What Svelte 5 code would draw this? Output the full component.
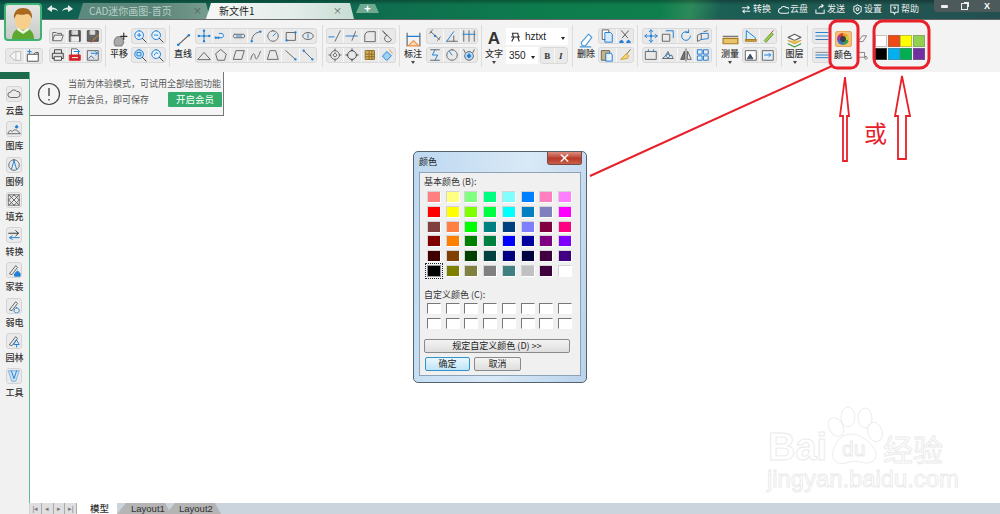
<script>
	const g = "#666";
	const b = "#1f7fd4";
	const o = "#d9a23b";

	// Each icon is a list of [path, stroke, fill] on a 16x16 box
	const icons = {
		open: [["M2 13V4h4l1 1h5v2", g], ["M2 13l2-6h10l-2 6z", g, "#eee"]],
		save: [["M2 2h12v12H2z", "#444", "#555"], ["M5 2h6v4H5z", "#ddd", "#ddd"], ["M4 9h8v5H4z", "#eee", "#eee"]],
		saveas: [["M2 2h12v12H2z", "#444", "#666"], ["M5 2h5v4H5z", "#ddd", "#ddd"], ["M7 14l7-7", "#e08a20"], ["M6 15l2-1", "#c33"]],
		print: [["M4 6V2h8v4", "#444"], ["M2 6h12v6H2z", "#444", "#ddd"], ["M4 10h8v4H4z", "#444", "#fff"]],
		pdf: [["M4 8V1h6l2 2v5", g, "#fff"], ["M2 8h12v6H2z", "#d2232a", "#d2232a"], ["M5 11h6", "#fff"], ["M7 4h6m-2-2l2 2-2 2", b]],
		exp: [["M2 3h12v11H2z", g, "#dfe8ef"], ["M3 12l3-3 3 3", "#567"], ["M6 6h7m-2-2l2 2-2 2", b]],
		back: [["M14 3H8L2 8l6 5h6z", "#bbb", "#f7f7f7"], ["M9 3v10", "#bbb"]],
		newdoc: [["M2 6h12v8H2z", "#555", "#fff"], ["M6 3H2m2-2v4", b], ["M9 6l2-2h3v2", "#555"]],
		pan: [["M4 14c-2-3-1-6 1-8 2-1 5-1 6 1l1 4-2 3z", "#888", "#aaa"], ["M12 2v6M9 5h6", "#333"]],
		zin: [["M7 2a5 5 0 1 0 .01 0z", b, "#e8f2fb"], ["M5 7h4M7 5v4", b], ["M10.5 10.5L15 15", "#444"]],
		zout: [["M7 2a5 5 0 1 0 .01 0z", b, "#e8f2fb"], ["M5 7h4", b], ["M10.5 10.5L15 15", "#444"]],
		zwin: [["M7 2a5 5 0 1 0 .01 0z", b, "#cfe3f5"], ["M5 5h4v4H5z", b], ["M10.5 10.5L15 15", "#444"]],
		zprev: [["M7 2a5 5 0 1 0 .01 0z", b, "#e8f2fb"], ["M5 8a2.5 2.5 0 0 1 4-2", b], ["M10.5 10.5L15 15", "#444"]],
		line: [["M3 13L13 4", g], ["M3 13h.1M13 4h.1", b, "none", 2.4]],
		axis: [["M8 2v12M2 8h12", b], ["M8 2h.1M8 14h.1M2 8h.1M14 8h.1M8 8h.1", b, "none", 2.6]],
		spline: [["M2 10h6c4 0 4-5 0-5H6", b], ["M2 10h.1M5 10h.1", b, "none", 2.6]],
		dblline: [["M3 6h10c2 0 2 4 0 4H3C1 10 1 6 3 6z", g], ["M5 8h6", b]],
		arc: [["M3 14C3 8 7 4 13 3", g], ["M3 14h.1M13 3h.1", b, "none", 2.6]],
		circ: [["M8 2a6 6 0 1 0 .01 0z", g], ["M8 8l3-3", b]],
		rect: [["M3 4h10v9H3z", g], ["M3 13h.1M13 4h.1", b, "none", 2.6]],
		ell: [["M8 4c8 0 8 8 0 8S0 4 8 4z", g], ["M8 6v4", b]],
		tri: [["M1 13L8 5l7 8z", g]],
		penta: [["M8 2l6 5-2 7H4L2 7z", g]],
		para: [["M5 3h9l-3 10H2z", g]],
		curve: [["M2 13c2-8 4-8 5-3s3 2 6-6", g]],
		trap: [["M5 3h6l3 10H2z", g]],
		diag: [["M2 3l11 10", g], ["M13 13h.1", b, "none", 2.6]],
		diag2: [["M3 3l10 10", g], ["M3 3h.1M13 13h.1", b, "none", 2.6]],
		trim: [["M1 9h6", b], ["M14 2L8 14", g]],
		ext: [["M1 8h13", b], ["M12 3L8 13", g]],
		fillet: [["M2 14V8c0-3 2-5 5-5h7v11z", g]],
		cham: [["M4 3l9 9a4 4 0 1 1-5-5", g], ["M3 2l3 4", g]],
		gear: [["M8 3a5 5 0 1 0 .01 0z", g], ["M8 6a2 2 0 1 0 .01 0z", g], ["M8 1v2M8 13v2M1 8h2M13 8h2", g]],
		ring: [["M8 3a5 5 0 1 0 .01 0z", "#444"], ["M8 1v2M8 13v2M1 8h2M13 8h2", "#444"]],
		hatch: [["M3 3h10v10H3z", "#8a6a20", "#d8b060"], ["M3 7h10M3 10h10M7 3v10M10 3v10", "#8a6a20"]],
		fill: [["M3 9l5-5 5 5-5 5z", b, "#9cd0f5"], ["M11 2l3 4", o]],
		dim: [["M2 2v12M14 2v12", g], ["M2 5h12", b], ["M3 14l5-5 5 5z", "#e89048", "#fbd9b0"]],
		dimA: [["M3 3l10 9", g], ["M5 1L2 5M14 9l-3 4", g], ["M8 8h.1", b, "none", 2.6]],
		dimB: [["M2 14h12", g], ["M2 14L10 3", b], ["M10 8v6", g]],
		dimC: [["M2 2v12M8 2v12M14 2v12", g], ["M1 6h14", b]],
		dimD: [["M3 2h10M3 14h10", g], ["M8 2l-3 6h6l-3 6", b]],
		dimE: [["M8 2a6 6 0 1 0 .01 0z", g], ["M8 8L5 4", b]],
		dimF: [["M2 2l2 4M14 2l-2 4", g], ["M8 4a5 5 0 1 0 .01 0z", g, "#bcdcf7"], ["M8 7a2 2 0 1 0 .01 0z", b, b]],
		eraser: [["M3 11l7-8 3 3-6 8H4z", "#4a9ad8", "#fff"], ["M2 15h10", "#4a9ad8"]],
		copy: [["M3 1h7v11H3z", g, "#fff"], ["M6 4h6l2 2v9H6z", b, "#d8ebfa"]],
		cut: [["M4 2l7 8M12 2l-7 8", "#555"], ["M4 13a2 2 0 1 0 .01 0zM12 13a2 2 0 1 0 .01 0z", b, b]],
		paste: [["M2 3h9v11H2z", g, "#c9b27c"], ["M7 6h6l1 2v7H7z", b, "#e6f1fb"]],
		brush: [["M14 2l-5 6", "#8a6a20"], ["M9 7l-6 6 8-1 1-3z", o, "#f0d37c"]],
		move: [["M8 1v14M1 8h14", b], ["M6 3l2-2 2 2M6 13l2 2 2-2M3 6L1 8l2 2M13 6l2 2-2 2", b], ["M8 8h.1", b, "none", 2.6]],
		scale: [["M2 6h8v8H2z", g], ["M6 2h8v8", b]],
		rot: [["M13 8a5 5 0 1 1-2-4", b], ["M11 1v3H8", b]],
		iso: [["M2 7l4-2v7l-4 2z", g], ["M6 5h8v6l-8 1", b], ["M9 3l4-1", g]],
		mrect: [["M2 4h12v9H2z", g], ["M5 4V2M11 4V2", b]],
		cloud2: [["M2 12h12l-2-4-2 1-2-5-3 5z", g], ["M8 7a2 2 0 1 0 .01 0z", b]],
		mirror: [["M8 1v14", g], ["M6 4L2 13h4z", "#555", "#777"], ["M10 4l4 9h-4z", g]],
		array: [["M2 2h5v5H2zM9 2h5v5H9zM2 9h5v5H2zM9 9h5v5H9z", b]],
		ruler: [["M1 7h14v5H1z", "#a87a20", "#e8c468"], ["M1 5h14", "#777"]],
		mArea: [["M3 2l10 8v2H3z", b, "#dcecfa"], ["M2 12h12v2H2z", "#a87a20", o]],
		mPen: [["M4 13l8-9 2 2-8 9z", "#6a9a30", "#9ccc50"], ["M12 4l2-2", "#d33"]],
		mImg: [["M2 3h12v11H2z", g, "#fff"], ["M4 12l3-5 3 5z", "#345", "#456"]],
		mExp: [["M2 3h12v11H2z", g, "#e4eef7"], ["M4 8h7m-2-2l2 2-2 2", b]],
		layer: [["M2 6l6-3 6 3-6 3z", g, "#fff"], ["M2 9l6 3 6-3", "#d9a23b", "#ecc860"], ["M2 12l6 3 6-3", "#3b9a4a"]],
		lines: [["M1 4h14M1 8h14", b], ["M1 12h14", "#3b6fb5"]],
		dash: [["M1 5h14", "#888"], ["M1 8h14M1 11h14", b]],
		tag: [["M2 12L8 4h6l-5 8z", g]],
		node: [["M2 5h9v7H2z", g], ["M13 11a2 2 0 1 0 .01 0z", g]],
		cloud: [["M4 12a3 3 0 0 1 0-6 4 4 0 0 1 7-1 3.5 3.5 0 0 1 1 7z", g]],
		hills: [["M1 13c2-4 3-4 5-2 2-3 5-3 9 2z", g], ["M11 4a1.5 1.5 0 1 0 .01 0z", b, b]],
		compass: [["M8 2a6 6 0 1 0 .01 0z", g], ["M8 3L5 13M8 3l3 10", b]],
		net: [["M2 2h12v12H2z", "#777"], ["M2 2l12 12M14 2L2 14M2 8l6-6M8 14l6-6M2 8l6 6M8 2l6 6", "#666"]],
		swap: [["M2 6h11m-3-3l3 3-3 3", "#333"], ["M14 11H3m3-2l-3 2 3 2", b]],
		house: [["M3 12L10 3l2 2-6 8z", g], ["M9 12l3-3 3 3v3H9z", b, b]],
		wire: [["M3 12L10 3l2 2-6 8z", g], ["M11 10a3 3 0 1 0 .01 0z", b]],
		tree: [["M3 12L10 3l2 2-6 8z", g], ["M11 7l3 5H8zM11 12v3", b]],
		vee: [["M2 2h12l-4 12H6z", "#7fb0e0", "#cfe3f7"], ["M5 2l3 9 3-9", b]],
	};

	// Toolbar pills: gap is the space before the item, rows hold the icon names
	const pill = (gap, width, rows) => ({ kind: "pills", gap, width, rows });
	const tool = (gap, width, label, name, caret = false) => ({ kind: "tool", gap, width, label, name, caret });
	const sep = (gap) => ({ kind: "sep", gap });

	const leading = [
		pill(0, 53, [["open", "save", "saveas"], ["print", "pdf", "exp"]]),
		sep(3),
		tool(1, 24, "平移", "pan"),
		pill(0, 35, [["zin", "zout"], ["zwin", "zprev"]]),
		sep(3),
		tool(1, 24, "直线", "line"),
		pill(0, 122, [["axis", "spline", "dblline", "arc", "circ", "rect", "ell"], ["tri", "penta", "para", "curve", "trap", "diag", "diag2"]]),
		sep(5),
		pill(3, 70, [["trim", "ext", "fillet", "cham"], ["gear", "ring", "hatch", "fill"]]),
		sep(3),
		tool(0, 26, "标注", "dim", true),
		pill(0, 52, [["dimA", "dimB", "dimC"], ["dimD", "dimE", "dimF"]]),
		sep(3),
		tool(0, 24, "文字", "", true),
	];
	const trailing = [
		sep(4),
		tool(1, 24, "删除", "eraser"),
		pill(0, 36, [["copy", "cut"], ["paste", "brush"]]),
		sep(3),
		pill(4, 70, [["move", "scale", "rot", "iso"], ["mrect", "cloud2", "mirror", "array"]]),
		sep(4),
		tool(1, 24, "测量", "ruler", true),
		pill(0, 35, [["mArea", "mPen"], ["mImg", "mExp"]]),
		sep(4),
		tool(0, 25, "图层", "layer", true),
		sep(0),
		pill(4, 19, [["lines"], ["dash"]]),
	];

	const quickColors = ["#ffffff", "#f04a14", "#ffff00", "#92d050", "#000000", "#00b0f0", "#00b050", "#7030a0"];

	const sideItems = [
		{ label: "云盘", name: "cloud" },
		{ label: "图库", name: "hills" },
		{ label: "图例", name: "compass" },
		{ label: "填充", name: "net" },
		{ label: "转换", name: "swap" },
		{ label: "家装", name: "house" },
		{ label: "弱电", name: "wire" },
		{ label: "园林", name: "tree" },
		{ label: "工具", name: "vee" },
	];

	const topLinks = [
		{ label: "转换", d: "M1 4h8m-2-2l2 2-2 2M10 8H2m2-2L2 8l2 2" },
		{ label: "云盘", d: "M3 10a2.5 2.5 0 0 1 0-5 3.5 3.5 0 0 1 6-1 3 3 0 0 1 1 6z" },
		{ label: "发送", d: "M1 6v4h9V6M4 5c1-2 3-3 5-3M7 0l2 2-2 2" },
		{ label: "设置", d: "M6 1l4 2v5l-4 3-4-3V3zM6 4a1.5 1.5 0 1 0 .01 0z" },
		{ label: "帮助", d: "M2 1h8v8H7l-1 2-1-2H2zM5 4c0-1 2-1 2 0S6 5 6 6" },
	];

	const basicColors = [
		"#ff8080", "#ffff80", "#80ff80", "#00ff80", "#80ffff", "#0080ff", "#ff80c0", "#ff80ff",
		"#ff0000", "#ffff00", "#80ff00", "#00ff40", "#00ffff", "#0080c0", "#8080c0", "#ff00ff",
		"#804040", "#ff8040", "#00ff00", "#008080", "#004080", "#8080ff", "#800040", "#ff0080",
		"#800000", "#ff8000", "#008000", "#008040", "#0000ff", "#0000a0", "#800080", "#8000ff",
		"#400000", "#804000", "#004000", "#004040", "#000080", "#000040", "#400040", "#400080",
		"#000000", "#808000", "#808040", "#808080", "#408080", "#c0c0c0", "#400040", "#ffffff",
	];
	const customSlots = Array(16).fill(0);
</script>

{#snippet icon(name, size = 14)}
	<svg class="ico" width={size} height={size} viewBox="0 0 16 16">
		{#each icons[name] || [] as [d, stroke, fill, weight]}
			<path {d} {stroke} fill={fill || "none"} stroke-width={weight || 1.1} stroke-linecap="round" stroke-linejoin="round" />
		{/each}
	</svg>
{/snippet}

{#snippet items(list)}
	{#each list as item}
		{#if item.kind === "sep"}
			<div class="sep" style="margin-left:{item.gap}px"></div>
		{:else if item.kind === "tool"}
			<div class="tool" style="margin-left:{item.gap}px;width:{item.width}px">
				<div class="tool-icon">
					{#if item.name}
						{@render icon(item.name, 17)}
					{:else}
						<span class="big-a">A</span>
					{/if}
				</div>
				<span class="tool-label">{item.label}</span>
				{#if item.caret}<span class="caret"></span>{/if}
			</div>
		{:else}
			<div class="pills" style="margin-left:{item.gap}px;width:{item.width}px">
				{#each item.rows as row}
					<div class="pill">
						{#each row as name}
							<span class="cell">{@render icon(name)}</span>
						{/each}
					</div>
				{/each}
			</div>
		{/if}
	{/each}
{/snippet}

<div class="app">
	<aside class="sidebar">
		<div class="side-head"></div>
		{#each sideItems as item}
			<div class="side-item">
				<span class="side-icon">{@render icon(item.name)}</span>
				<span>{item.label}</span>
			</div>
		{/each}
	</aside>

	<div class="titlebar">
		<div class="tabs">
			<span class="arrow">
				<svg width="28" height="12" viewBox="0 0 28 12">
					<path d="M1 6l5-4v2.500c3 0 5 1 6 4-2-2-3-2-6-2V9z M27 6l-5-4v2.500c-3 0-5 1-6 4 2-2 3-2 6-2V9z" fill="#e8efec" />
				</svg>
			</span>
			<div class="tab tab-home">CAD迷你画图-首页<i>×</i></div>
			<div class="tab tab-file">新文件1<i>×</i></div>
			<div class="tab-plus">+</div>
		</div>
		<div class="links">
			{#each topLinks as link}
				<span class="link">
					<svg width="11" height="11" viewBox="0 0 12 12">
						<path d={link.d} fill="none" stroke="#f2f2f2" stroke-width="1.100" />
					</svg>
					{link.label}
				</span>
			{/each}
		</div>
		<div class="winbtns">
			<span class="winbtn"><b class="min"></b></span>
			<span class="winbtn"><b class="restore"></b></span>
			<span class="winbtn close">X</span>
		</div>
	</div>

	<div class="avatar">
		<svg width="34" height="34" viewBox="0 0 34 34">
			<path d="M6 34c0-8 5-11 11-11s11 3 11 11z" fill="#5fa82f" />
			<path d="M12 22l5 4 5-4 1 3-6 4-6-4z" fill="#eef5e2" />
			<ellipse cx="17" cy="15" rx="8" ry="10" fill="#f7cf8a" />
			<path d="M8 14c-1-8 4-11 9-11s10 3 9 11c-1-3-3-5-5-5-3 1-8 1-10 0-1 1-2 3-3 5z" fill="#a9691f" />
		</svg>
	</div>

	<div class="toolbar">
		<div class="lead">
			<div class="pill small-pill">
				<span class="cell">{@render icon("back")}</span>
				<span class="cell">{@render icon("newdoc")}</span>
			</div>
		</div>

		{@render items(leading)}

		<div class="font-box">
			<div class="select">
				<span class="font-glyph">
					<svg width="13" height="12" viewBox="0 0 16 16">
						<path d="M4 3h7l1 5H5zM3 14l3-6M11 8l2 6M2 8h12" fill="none" stroke="#333" stroke-width="1.600" />
					</svg>
				</span>
				<span class="font-name">hztxt</span>
				<span class="drop"></span>
			</div>
			<div class="font-row">
				<div class="select size"><span class="font-name">350</span><span class="drop"></span></div>
				<div class="pill bi"><span class="cell"><b>B</b></span><span class="cell"><em>I</em></span></div>
			</div>
		</div>

		{@render items(trailing)}

		<div class="color-btn">
			<span class="color-box"><span class="color-wheel"></span></span>
			<span class="tool-label">颜色</span>
		</div>
		<div class="mini-col">
			{@render icon("tag", 11)}
			{@render icon("node", 11)}
		</div>
		<div class="swatches">
			{#each quickColors as color}
				<span class="swatch" style="background:{color}"></span>
			{/each}
		</div>
	</div>

	<main class="canvas">
		<div class="notice">
			<svg width="24" height="24" viewBox="0 0 24 24">
				<circle cx="12" cy="12" r="10.500" fill="none" stroke="#444" stroke-width="1.200" />
				<path d="M12 6v8M12 17v1.500" stroke="#444" stroke-width="1.400" />
			</svg>
			<div class="notice-text">
				<p>当前为体验模式，可试用全部绘图功能</p>
				<div class="notice-row">
					<p>开启会员，即可保存</p>
					<span class="vip">开启会员</span>
				</div>
			</div>
		</div>

		<section class="dialog">
			<header class="dlg-title">
				<span>颜色</span>
				<span class="dlg-close">×</span>
			</header>
			<div class="dlg-body">
				<p class="dlg-label">基本颜色 (B):</p>
				<div class="color-grid">
					{#each basicColors as color, i}
						<span class="cc {i === 40 ? 'picked' : ''}" style="background:{color}"></span>
					{/each}
				</div>
				<p class="dlg-label custom">自定义颜色 (C):</p>
				<div class="color-grid custom-grid">
					{#each customSlots as _}
						<span class="cc empty"></span>
					{/each}
				</div>
				<button class="dlg-btn wide">规定自定义颜色 (D) &gt;&gt;</button>
				<div class="dlg-actions">
					<button class="dlg-btn ok">确定</button>
					<button class="dlg-btn cancel">取消</button>
				</div>
			</div>
		</section>

		<svg class="watermark" width="190" height="100" viewBox="0 0 190 100">
			<g fill="none" stroke="#eaeaea" stroke-width="0.900">
				<ellipse cx="70" cy="21" rx="7" ry="10" transform="rotate(-30 70 21)" />
				<ellipse cx="82" cy="11" rx="7" ry="10" />
				<ellipse cx="99" cy="12" rx="7" ry="10" />
				<ellipse cx="109" cy="26" rx="7" ry="10" transform="rotate(-20 109 26)" />
				<path d="M67 46c2-12 10-18 18-18s18 6 24 16c4 8-2 14-10 13-7-2-13-2-19 0-9 2-15-3-13-11z" />
				<text x="2" y="54" font-size="38" font-weight="700" class="mark">Bai</text>
				<text x="76" y="50" font-size="21" class="mark">du</text>
				<text x="117" y="55" font-size="30" class="mark">经验</text>
				<text x="1" y="81" font-size="23.800" class="mark">jingyan.baidu.com</text>
			</g>
		</svg>

		<svg class="marks" width="1000" height="514" viewBox="0 0 1000 514">
			<g fill="none" stroke="#e8202a">
				<path d="M590 176L832 66" stroke-width="2" />
				<rect x="830" y="21" width="28" height="47" rx="7" stroke-width="3" />
				<rect x="874" y="21" width="55" height="47" rx="9" stroke-width="3" />
				<path d="M845 77l4 39h-2v45h-4v-45h-3z" stroke-width="1.800" />
				<path d="M902 76l8 40h-4v43h-8v-43h-3z" stroke-width="1.800" />
			</g>
			<text x="864" y="142" class="huo">或</text>
		</svg>
	</main>

	<div class="sheets">
		<div class="nav">
			<span>|◂</span><span>◂</span><span>▸</span><span>▸|</span>
		</div>
		<span class="sheet active">模型</span>
		<span class="sheet">Layout1</span>
		<span class="sheet two">Layout2</span>
	</div>
</div>

<style>
	:global(body) {
		margin: 0;
		background: #fff;
	}

	.app {
		position: relative;
		width: 1000px;
		height: 514px;
		overflow: hidden;
		display: grid;
		grid-template-columns: 29px 1fr;
		grid-template-rows: 20px 52px 1fr 11px;
		font-family: "Noto Sans CJK SC", "Liberation Sans", sans-serif;
		font-size: 9px;
		color: #333;
	}

	.titlebar {
		grid-column: 1 / 3;
		grid-row: 1;
		display: flex;
		align-items: flex-start;
		border-bottom: 1px solid #666;
		box-sizing: border-box;
		background:
			linear-gradient(180deg, rgba(0, 0, 0, 0.3) 0, rgba(0, 0, 0, 0) 5px),
			linear-gradient(100deg, #0f5f52 0, #0f6b50 35%, #0d7d4d 55%, #0f7f4e 66%, #2d8a5a 69%, #1b5f55 72%, #24504f 100%);
	}

	.avatar {
		position: absolute;
		left: 4px;
		top: 3px;
		width: 38px;
		height: 38px;
		box-sizing: border-box;
		border: 2px solid #3fb273;
		border-radius: 4px;
		background: linear-gradient(180deg, #e4e6e4, #c8cac8);
		overflow: hidden;
		z-index: 2;
	}

	.avatar svg {
		display: block;
	}

	.tabs {
		display: flex;
		align-items: flex-end;
		height: 19px;
		padding-left: 46px;
	}

	.arrow {
		width: 32px;
		height: 16px;
	}

	.tab {
		height: 16px;
		line-height: 16px;
		font-size: 10px;
		display: flex;
		justify-content: space-between;
		box-sizing: border-box;
		clip-path: polygon(5px 0, calc(100% - 4px) 0, 100% 100%, 0 100%);
	}

	.tab i {
		font-style: normal;
		font-size: 9px;
		color: #555;
	}

	.tab-home {
		width: 132px;
		padding: 0 8px 0 11px;
		color: #b8d0c8;
		background: linear-gradient(90deg, #5d8a7e, #5b8578 60%, #789c90);
	}

	.tab-file {
		width: 148px;
		margin-left: -4px;
		padding: 0 12px 0 13px;
		color: #222;
		background: linear-gradient(90deg, #f5f7f6, #e2ece8 60%, #c8dcd4);
	}

	.tab-plus {
		width: 23px;
		height: 9px;
		line-height: 9px;
		margin: 0 0 6px 2px;
		text-align: center;
		font-size: 11px;
		font-weight: 700;
		color: #fff;
		background: #6fa98f;
		clip-path: polygon(4px 0, calc(100% - 4px) 0, 100% 100%, 0 100%);
	}

	.links {
		margin-left: auto;
		display: flex;
		gap: 7px;
		padding-top: 3px;
		color: #eee;
		font-size: 9px;
		line-height: 12px;
	}

	.link {
		display: flex;
		align-items: center;
		gap: 1px;
	}

	.winbtns {
		display: flex;
		margin-left: 15px;
		height: 12px;
		background: #4c5a5c;
		border-radius: 0 0 0 3px;
	}

	.winbtn {
		width: 20px;
		display: flex;
		align-items: center;
		justify-content: center;
		color: #fff;
		font: 700 9px "Liberation Sans", sans-serif;
	}

	.winbtn.close {
		width: 26px;
	}

	.min {
		width: 7px;
		height: 3px;
		background: #eee;
		border-radius: 1px;
	}

	.restore {
		width: 5px;
		height: 5px;
		border: 1px solid #eee;
		box-shadow: 2px -2px 0 -1px #eee;
	}

	.toolbar {
		grid-column: 1 / 3;
		grid-row: 2;
		display: flex;
		align-items: flex-start;
		padding-top: 8px;
		box-sizing: border-box;
		background: #f3f3f3;
		position: relative;
	}

	.lead {
		width: 49px;
		height: 36px;
		flex: none;
		display: flex;
		align-items: flex-end;
		padding-left: 5px;
		box-sizing: border-box;
	}

	.small-pill {
		width: 38px;
	}

	.pills {
		display: flex;
		flex-direction: column;
		gap: 3px;
		flex: none;
	}

	.pill {
		display: flex;
		height: 16px;
		border: 1px solid #d9d9d9;
		border-radius: 3px;
		background: #e9e9e9;
		box-sizing: border-box;
	}

	.cell {
		flex: 1;
		display: flex;
		align-items: center;
		justify-content: center;
		border-left: 1px solid #f8f8f8;
		min-width: 0;
	}

	.cell:first-child {
		border-left: 0;
	}

	.ico {
		flex: none;
		display: block;
	}

	.sep {
		width: 1px;
		height: 42px;
		margin-top: -3px;
		background: #dcdcdc;
		flex: none;
	}

	.tool {
		flex: none;
		display: flex;
		flex-direction: column;
		align-items: center;
		font-size: 9px;
		position: relative;
	}

	.tool-icon {
		height: 18px;
		padding-top: 2px;
		display: flex;
		align-items: center;
	}

	.big-a {
		font: 700 17px "Liberation Sans", sans-serif;
		color: #333;
	}

	.tool-label {
		font-weight: 500;
		line-height: 12px;
		color: #333;
		white-space: nowrap;
	}

	.caret {
		border: 2px solid transparent;
		border-top: 3px solid #444;
		margin-top: 1px;
	}

	.font-box {
		width: 62px;
		margin-left: 0;
		display: flex;
		flex-direction: column;
		gap: 2px;
		flex: none;
	}

	.font-row {
		display: flex;
		gap: 2px;
	}

	.select {
		display: flex;
		align-items: center;
		height: 17px;
		padding: 0 3px;
		background: #fff;
		font: 10px "Liberation Sans", sans-serif;
		color: #222;
		box-sizing: border-box;
	}

	.select.size {
		width: 32px;
		padding-left: 3px;
	}

	.font-glyph {
		margin-right: 3px;
		display: flex;
	}

	.drop {
		margin-left: auto;
		margin-top: 3px;
		border: 2.500px solid transparent;
		border-top: 3px solid #222;
		border-bottom: 0;
	}

	.bi {
		width: 28px;
		height: 17px;
		font: 700 9px "Liberation Serif", serif;
		color: #333;
	}

	.color-btn {
		flex: none;
		width: 18px;
		margin: 3px 0 0 3px;
		display: flex;
		flex-direction: column;
		align-items: center;
		position: relative;
	}

	.color-box {
		width: 17px;
		height: 16px;
		display: flex;
		align-items: center;
		justify-content: center;
		border-radius: 2px;
		background: #f6c27a;
		border: 1px solid #e8a85a;
		box-sizing: border-box;
	}

	.color-wheel {
		width: 12px;
		height: 12px;
		border-radius: 50%;
		background:
			radial-gradient(circle, #3c3c44 0 2.500px, transparent 3.500px),
			conic-gradient(#e6a020 0 15%, #c8c830 15% 30%, #3b9b4b 30% 50%, #3a6fc8 50% 70%, #a03cb0 70% 85%, #e23a30 85%);
	}

	.color-btn .tool-label {
		margin-top: 2px;
	}

	.mini-col {
		flex: none;
		width: 12px;
		margin: 5px 0 0 5px;
		display: flex;
		flex-direction: column;
		gap: 5px;
	}

	.swatches {
		flex: none;
		display: grid;
		grid-template-columns: repeat(4, 12px);
		grid-auto-rows: 12px;
		gap: 1px 0.500px;
		margin: 7px 0 0 6px;
	}

	.swatch {
		box-sizing: border-box;
		border: 1.500px solid rgba(120, 120, 120, 0.45);
	}

	.sidebar {
		grid-column: 1;
		grid-row: 3 / 5;
		background: #f1f1f1;
		display: flex;
		flex-direction: column;
		align-items: center;
		gap: 0;
	}

	.side-head {
		align-self: stretch;
		height: 7px;
		margin-bottom: 7px;
		margin-right: -1px;
		background: #1d6b4c;
	}

	.side-item {
		height: 35.300px;
		display: flex;
		flex-direction: column;
		align-items: center;
		font-weight: 500;
		line-height: 11px;
		color: #333;
	}

	.side-icon {
		width: 16px;
		height: 16px;
		display: flex;
		align-items: center;
		justify-content: center;
		margin-bottom: 3px;
		box-sizing: border-box;
		background: #eaeaea;
		border: 1px solid #d4d4d4;
		border-radius: 3px;
	}

	.canvas {
		grid-column: 2;
		grid-row: 3;
		background: #fff;
		border-left: 1px solid #62bb90;
		position: relative;
	}

	.notice {
		position: absolute;
		left: 0;
		top: 0;
		width: 194px;
		height: 44px;
		display: flex;
		align-items: center;
		gap: 7px;
		padding-left: 7px;
		box-sizing: border-box;
		background: #f5f5f5;
		border-right: 1px solid #777;
		border-bottom: 1px solid #777;
		color: #555;
	}

	.notice p {
		margin: 0;
		white-space: nowrap;
	}

	.notice-text {
		display: flex;
		flex-direction: column;
		gap: 2px;
		line-height: 13px;
		padding-bottom: 3px;
	}

	.notice-row {
		display: flex;
		justify-content: space-between;
		align-items: center;
		height: 15px;
	}

	.vip {
		width: 54px;
		height: 15px;
		line-height: 15px;
		margin-right: -1px;
		text-align: center;
		color: #fff;
		background: #33ac6c;
		border-radius: 1px;
		font-size: 9.500px;
	}

	.dialog {
		position: absolute;
		left: 383px;
		top: 79px;
		width: 174px;
		height: 232px;
		box-sizing: border-box;
		border: 1px solid #56636e;
		border-radius: 5px;
		background: linear-gradient(100deg, #bdd8f0, #d9e9f7 55%, #b9d3ec);
		padding: 0 5px 6px;
		display: flex;
		flex-direction: column;
	}

	.dlg-title {
		height: 20px;
		display: flex;
		justify-content: space-between;
		align-items: flex-start;
		font-size: 9px;
		color: #222;
		line-height: 19px;
	}

	.dlg-close {
		width: 35px;
		height: 13px;
		line-height: 12px;
		margin-right: -1px;
		text-align: center;
		color: #fff;
		font-weight: 700;
		font-size: 12px;
		background: linear-gradient(180deg, #dd8f80, #b83a28 55%, #c9604a);
		border: 1px solid #7a4a44;
		border-top: 0;
		border-radius: 0 0 3px 3px;
		box-sizing: border-box;
	}

	.dlg-body {
		flex: 1;
		background: #f0f0f0;
		border: 1px solid #8da2b5;
		padding: 3px 7px 0 7px;
		box-sizing: border-box;
	}

	.dlg-label {
		margin: 0;
		font-size: 9px;
		line-height: 12px;
		color: #333;
		margin-left: -3px;
	}

	.dlg-label.custom {
		margin-top: 12px;
	}

	.color-grid {
		display: grid;
		grid-template-columns: repeat(8, 14px);
		justify-content: space-between;
		grid-auto-rows: 12px;
		row-gap: 2.800px;
		margin-top: 3px;
		margin-right: 1px;
	}

	.custom-grid {
		grid-auto-rows: 11px;
		row-gap: 4px;
		margin-top: 2px;
	}

	.cc {
		box-sizing: border-box;
		border: 1.500px solid #d4d4d4;
		border-right-color: #fff;
		border-bottom-color: #fff;
	}

	.cc.empty {
		background: #fff;
		border: 1px solid #fff;
		border-top-color: #777;
		border-left-color: #777;
	}

	.cc.picked {
		outline: 1px dotted #222;
		outline-offset: 1px;
		border-color: #999;
	}

	.dlg-btn {
		display: block;
		padding: 0;
		font: 9px "Noto Sans CJK SC", sans-serif;
		color: #222;
		border: 1px solid #8a8a8a;
		border-radius: 2px;
		background: linear-gradient(180deg, #f4f4f4, #dedede);
		box-sizing: border-box;
	}

	.dlg-btn.wide {
		width: 146px;
		height: 14px;
		line-height: 12px;
		margin: 10px 0 0 -3px;
	}

	.dlg-actions {
		display: flex;
		gap: 4px;
		margin: 4px 0 0 -2px;
	}

	.ok {
		width: 45px;
		height: 14px;
		line-height: 12px;
		border-color: #2f93cc;
		background: linear-gradient(180deg, #eaf6fd, #bfe4f8);
	}

	.cancel {
		width: 47px;
		height: 14px;
		line-height: 12px;
	}

	.watermark {
		position: absolute;
		left: 736px;
		top: 334px;
		overflow: visible;
	}

	.mark {
		font-family: "Liberation Sans", "Noto Sans CJK SC", sans-serif;
	}

	.marks {
		position: absolute;
		left: -30px;
		top: -72px;
		overflow: visible;
		pointer-events: none;
		z-index: 3;
	}

	.huo {
		font-family: "Noto Sans CJK SC", sans-serif;
		font-size: 23px;
		fill: #e8202a;
	}

	.sheets {
		grid-column: 2;
		grid-row: 4;
		display: flex;
		align-items: stretch;
		background: #cbd3dc;
		font: 9.500px "Liberation Sans", "Noto Sans CJK SC", sans-serif;
		color: #333;
		line-height: 11px;
	}

	.nav {
		width: 47px;
		margin-left: 1px;
		display: flex;
		background: #dfdfdf;
		font-size: 7px;
		color: #777;
	}

	.nav span {
		flex: 1;
		text-align: center;
		border-right: 1px solid #aaa;
		overflow: hidden;
	}

	.sheet {
		width: 54px;
		padding-left: 14px;
		box-sizing: border-box;
		margin-right: -5px;
		background: #b4b4b4;
		clip-path: polygon(9px 0, calc(100% - 6px) 0, 100% 100%, 0 100%);
	}

	.sheet.active {
		width: 40px;
		padding-left: 13px;
		margin-right: 0;
		background: #fff;
		clip-path: none;
		font-weight: 500;
	}

	.sheet.two {
		width: 55px;
		padding-left: 13px;
	}
</style>
